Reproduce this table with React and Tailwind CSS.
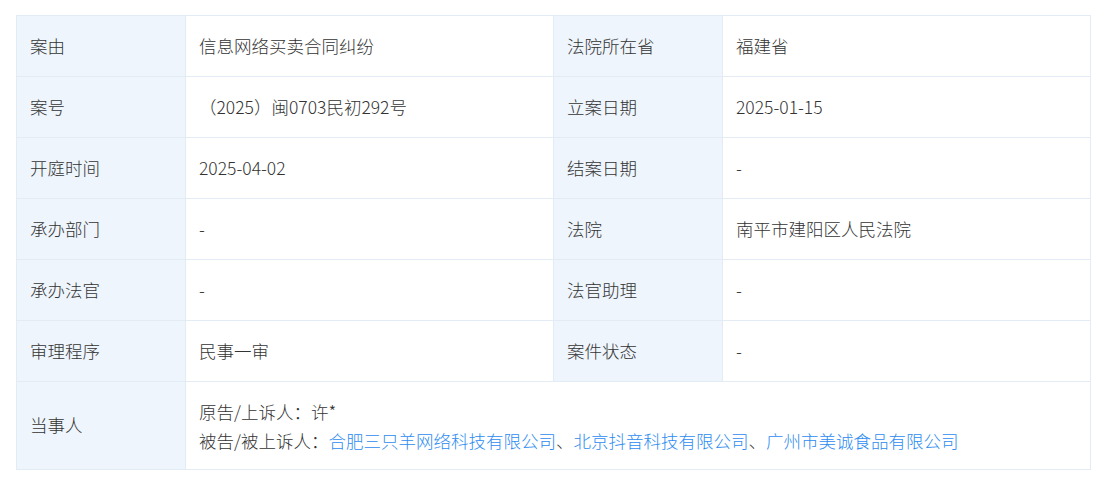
import React from 'react';

const rows = [
    ['案由', '信息网络买卖合同纠纷', '法院所在省', '福建省'],
    ['案号', '（2025）闽0703民初292号', '立案日期', '2025-01-15'],
    ['开庭时间', '2025-04-02', '结案日期', '-'],
    ['承办部门', '-', '法院', '南平市建阳区人民法院'],
    ['承办法官', '-', '法官助理', '-'],
    ['审理程序', '民事一审', '案件状态', '-'],
];

const defendants = ['合肥三只羊网络科技有限公司', '北京抖音科技有限公司', '广州市美诚食品有限公司'];

function Label({ children }) {
    return <td className="w-[169px] h-[61px] border border-[#e3ecf5] bg-[#eef5fc] px-[13px] align-middle">{children}</td>;
}

function Value({ children, colSpan }) {
    return <td colSpan={colSpan} className="border border-[#e3ecf5] bg-white px-[13px] align-middle">{children}</td>;
}

export default function App() {
    return (
        <div className="bg-white min-h-screen pt-[15px] px-4 text-[17.5px] font-light text-[#333] font-['Noto_Sans_CJK_SC',sans-serif]">
            <table className="w-[1074px] border-collapse table-fixed">
                <colgroup>
                    <col className="w-[169px]" />
                    <col className="w-[368px]" />
                    <col className="w-[169px]" />
                    <col className="w-[368px]" />
                </colgroup>
                <tbody>
                    {rows.map((r) => (
                        <tr key={r[0]}>
                            <Label>{r[0]}</Label>
                            <Value>{r[1]}</Value>
                            <Label>{r[2]}</Label>
                            <Value>{r[3]}</Value>
                        </tr>
                    ))}
                    <tr>
                        <td className="h-[88px] border border-[#e3ecf5] bg-[#eef5fc] px-[13px] align-middle">当事人</td>
                        <Value colSpan={3}>
                            <div className="leading-[29px]">原告/上诉人：许*</div>
                            <div className="leading-[29px]">
                                被告/被上诉人：
                                {defendants.map((d, i) => (
                                    <span key={d}>
                                        <span className="text-[#2d8cf0]">{d}</span>
                                        {i < defendants.length - 1 && '、'}
                                    </span>
                                ))}
                            </div>
                        </Value>
                    </tr>
                </tbody>
            </table>
        </div>
    );
}
